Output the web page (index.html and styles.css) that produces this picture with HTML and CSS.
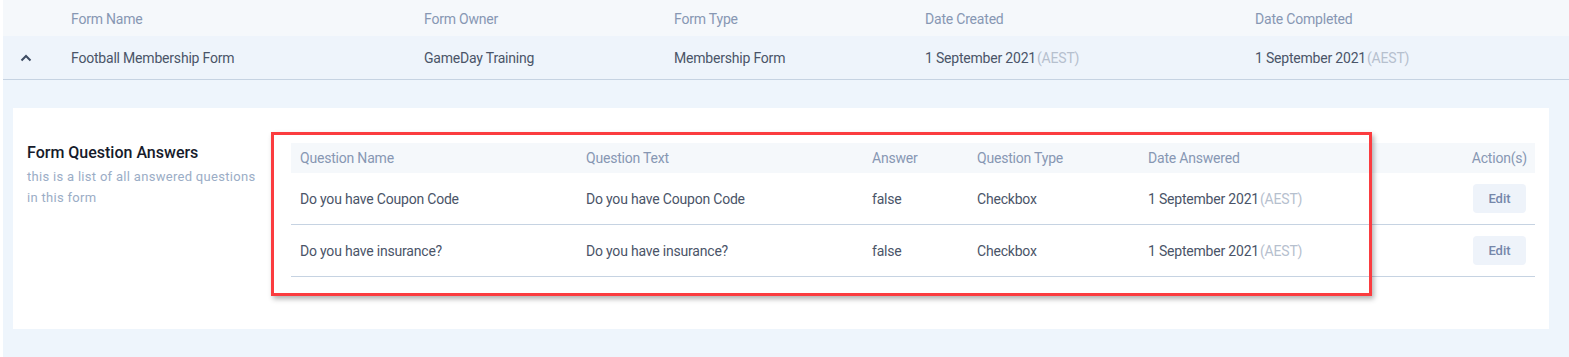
FILE: index.html
```html
<!DOCTYPE html>
<html lang="en">
<head>
    <meta charset="UTF-8">
    <meta name="viewport" content="width=device-width, initial-scale=1.0">
    <title>Form Answers</title>
    <link rel="stylesheet" href="styles.css">
</head>
<body>
    <div class="page">
        <div class="forms-head forms-grid">
            <span></span>
            <span>Form Name</span>
            <span>Form Owner</span>
            <span>Form Type</span>
            <span>Date Created</span>
            <span>Date Completed</span>
        </div>
        <div class="forms-row forms-grid">
            <span class="toggle">
                <svg width="12" height="8" viewBox="0 0 12 8"><path d="M1.5 6.5 L6 2 L10.5 6.5" fill="none" stroke="#3e4c63" stroke-width="2"/></svg>
            </span>
            <span>Football Membership Form</span>
            <span>GameDay Training</span>
            <span>Membership Form</span>
            <span>1 September 2021<span class="tz">(AEST)</span></span>
            <span>1 September 2021<span class="tz">(AEST)</span></span>
        </div>

        <div class="expanded">
            <div class="panel">
                <div class="panel-intro">
                    <h3>Form Question Answers</h3>
                    <p>this is a list of all answered questions in this form</p>
                </div>
                <div class="answers">
                    <div class="answers-head answers-grid">
                        <span>Question Name</span>
                        <span>Question Text</span>
                        <span>Answer</span>
                        <span>Question Type</span>
                        <span>Date Answered</span>
                        <span class="right">Action(s)</span>
                    </div>
                    <div class="answers-row answers-grid">
                        <span>Do you have Coupon Code</span>
                        <span>Do you have Coupon Code</span>
                        <span>false</span>
                        <span>Checkbox</span>
                        <span>1 September 2021<span class="tz">(AEST)</span></span>
                        <span class="right"><button class="edit-btn">Edit</button></span>
                    </div>
                    <div class="answers-row answers-grid">
                        <span>Do you have insurance?</span>
                        <span>Do you have insurance?</span>
                        <span>false</span>
                        <span>Checkbox</span>
                        <span>1 September 2021<span class="tz">(AEST)</span></span>
                        <span class="right"><button class="edit-btn">Edit</button></span>
                    </div>
                </div>
                <div class="highlight"></div>
            </div>
        </div>
    </div>
</body>
</html>
```

FILE: styles.css
```css
body {
    margin: 0;
    background-color: #fff;
    font-family: Roboto, 'Noto Sans', sans-serif;
    font-size: 14px;
    letter-spacing: -0.2px;
    color: #4a5468;
}
.page {
    margin-left: 3px;
}
.forms-grid {
    display: grid;
    grid-template-columns: 68px 353px 250px 251px 330px 1fr;
    align-items: center;
}
.forms-head {
    height: 34px;
    padding-top: 2px;
    background-color: #f5f8fb;
    color: #8797b3;
}
.forms-row {
    height: 43px;
    background-color: #eef4fb;
    border-bottom: 1px solid #c6d3e2;
}
.toggle {
    display: flex;
    padding-left: 17px;
}
.tz {
    color: #b6c0ce;
    margin-left: 1px;
}
.expanded {
    background-color: #eef5fc;
    padding: 28px 20px 28px 10px;
}
.panel {
    position: relative;
    display: flex;
    background-color: #fff;
    padding: 35px 14px 52px 14px;
}
.panel-intro {
    width: 264px;
    flex-shrink: 0;
}
.panel-intro h3 {
    margin: 0;
    font-size: 16px;
    font-weight: 500;
    line-height: 20px;
    letter-spacing: 0;
    color: #161b2b;
}
.panel-intro p {
    margin: 3px 0 0;
    font-size: 13px;
    line-height: 21px;
    letter-spacing: 0.3px;
    color: #9badc6;
    width: 232px;
}
.answers {
    flex: 1;
}
.answers-grid {
    display: grid;
    grid-template-columns: 286px 286px 105px 171px 1fr 120px;
    align-items: center;
    padding: 0 8px 0 9px;
}
.answers-head {
    height: 30px;
    background-color: #f5f8fb;
    color: #8797b3;
}
.answers-row {
    height: 51px;
    border-bottom: 1px solid #c6d3e2;
}
.right {
    text-align: right;
}
.edit-btn {
    width: 53px;
    height: 29px;
    border: none;
    border-radius: 4px;
    background-color: #eef3fa;
    color: #7587aa;
    font-family: inherit;
    font-size: 13px;
    font-weight: 500;
    margin-right: 1px;
}
.highlight {
    position: absolute;
    left: 258px;
    top: 24px;
    width: 1101px;
    height: 164px;
    box-sizing: border-box;
    border: 3px solid #fb3c3f;
    box-shadow: 2px 3px 5px rgba(0, 0, 0, 0.3);
    pointer-events: none;
}
```
